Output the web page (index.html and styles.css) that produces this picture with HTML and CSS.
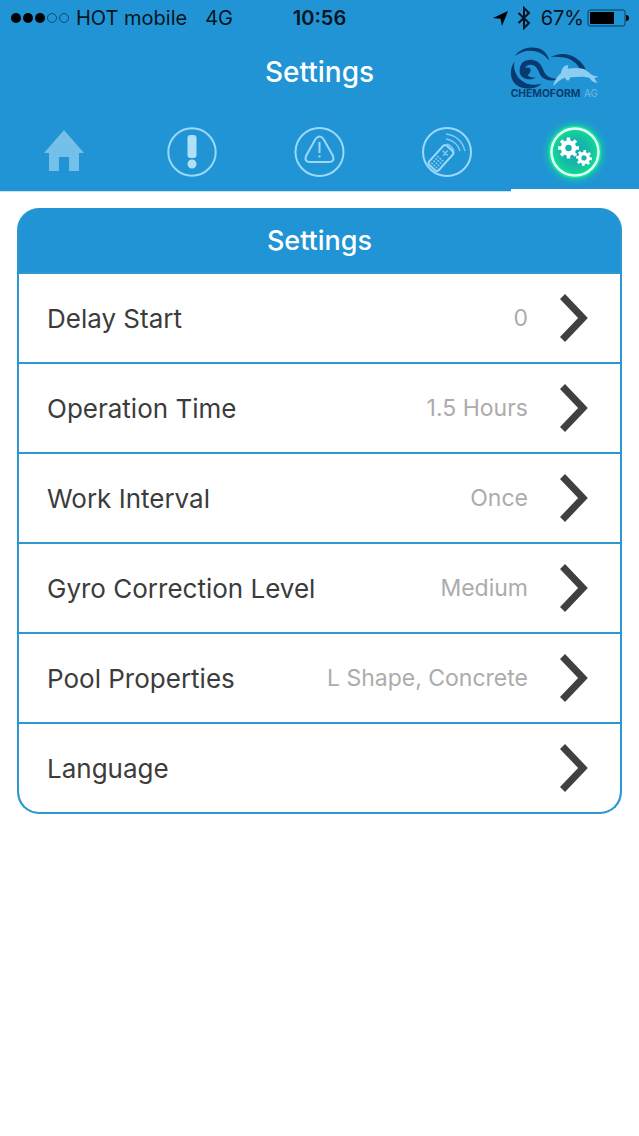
FILE: index.html
```html
<!DOCTYPE html>
<html lang="en">
<head>
<meta charset="utf-8">
<meta name="viewport" content="width=device-width, initial-scale=1">
<title>Settings</title>
<link rel="stylesheet" href="styles.css">
</head>
<body>
<header class="header">
  <div class="status">
    <div class="status-left">
      <svg class="signal" viewBox="0 0 60 12" aria-hidden="true">
        <circle cx="6" cy="6" r="5"/><circle cx="18" cy="6" r="5"/><circle cx="30" cy="6" r="5"/>
        <circle class="signal-off" cx="42" cy="6" r="4.5"/><circle class="signal-off" cx="54" cy="6" r="4.5"/>
      </svg>
      <span>HOT mobile</span>
      <span class="network">4G</span>
    </div>
    <div class="clock">10:56</div>
    <div class="status-right">
      <svg class="location" viewBox="0 0 16 16" aria-hidden="true"><path d="M16 0 0 7.5 8 8.2 9.6 16Z"/></svg>
      <svg class="bluetooth" viewBox="0 0 14 24" aria-hidden="true"><path d="M1.5 7 12 17 7 22V2L12 7 1.5 17"/></svg>
      <span>67%</span>
      <svg class="battery" viewBox="0 0 42 18" aria-hidden="true">
        <rect class="battery-case" x="1" y="1" width="37" height="16" rx="2"/><rect x="3" y="3" width="24" height="12"/><path d="M39 6q3 0 3 3t-3 3Z"/>
      </svg>
    </div>
  </div>
  <div class="title-bar">
    <h1 class="title">Settings</h1>
    <svg class="logo" viewBox="0 0 360 222" role="img" aria-label="Chemoform AG">
      <path class="logo-wave" d="M60 59C82 31 118 31 138 40C152 48 159 60 163 74C146 52 126 44 105 44C87 44 75 50 60 59Z"/>
      <path class="logo-wave" d="M58 78C42 98 40 150 90 157C112 160 129 154 140 143C122 148 104 147 90 140C66 128 54 104 58 78Z"/>
      <path class="logo-wave" d="M74 108C72 80 90 70 108 71C132 73 140 88 146 104C152 119 162 126 192 130C172 136 148 134 138 120C130 108 128 88 108 86C96 86 90 92 92 97C98 92 108 96 107 104C106 111 100 114 98 118C103 124 112 126 122 124C108 136 76 130 74 108Z"/>
      <path class="logo-wave" d="M167 63C197 47 230 53 250 72C261 80 267 90 272 100L254 97C241 75 218 62 190 63Q178 62 167 63Z"/>
      <path class="logo-dolphin" d="M174 151Q179 128 198 111C200 98 206 88 221 87Q217 93 218 98C240 96 262 93 280 108C291 117 295 121 311 121Q302 126 298 127L307 141Q291 139 284 126C264 119 246 123 227 124L220 134Q211 132 210 125C197 128 187 139 174 151Z"/>
      <text class="logo-text" x="47" y="183">CHEMOFORM</text>
      <text class="logo-text logo-suffix" x="267" y="183">AG</text>
    </svg>
  </div>
  <nav class="tabs" aria-label="Main">
    <a class="tab" href="#home" aria-label="Home">
      <svg class="tab-icon" viewBox="0 0 64 64"><path class="house" d="M32 10 52 33H47V51H37V37H27V51H17V33H12Z"/></svg>
    </a>
    <a class="tab" href="#status" aria-label="Status">
      <svg class="tab-icon" viewBox="0 0 64 64"><circle class="line" cx="32" cy="32" r="23.7"/><rect class="soft" x="27.5" y="15" width="9" height="23" rx="3"/><circle class="soft" cx="32" cy="44" r="4.5"/></svg>
    </a>
    <a class="tab" href="#alerts" aria-label="Alerts">
      <svg class="tab-icon" viewBox="0 0 64 64"><circle class="line" cx="32.5" cy="32" r="24"/><path class="line" d="M28.5 19Q32.5 14 36.5 19L46 36Q48 42 42 42H23Q17 42 19 36Z"/><path class="line" d="M32.5 22V33M32.5 35.5V37.5"/></svg>
    </a>
    <a class="tab" href="#remote" aria-label="Remote control">
      <svg class="tab-icon" viewBox="0 0 64 64"><circle class="line" cx="32" cy="32" r="24"/>
        <g transform="translate(26 38) rotate(42)"><rect class="line" x="-6.5" y="-13" width="13" height="26" rx="3"/><path class="fine" d="M0-10V-3M-3.5-6.5H3.5M-4 1H-2M-1 1H1M2 1H4M-4 4H-2M-1 4H1M2 4H4M-4 7H-2M-1 7H1M2 7H4M-4 10H-2M-1 10H1M2 10H4"/></g>
        <path class="fine" d="M32 24Q37 26 39 31M31 19Q42 21 45 31M31 14Q46 16 50 31"/></svg>
    </a>
    <a class="tab tab-active" href="#settings" aria-label="Settings" aria-current="page">
      <svg class="tab-icon glow" viewBox="0 0 64 64">
        <defs><radialGradient id="halo-fill"><stop offset="0" stop-color="#16a9b8"/><stop offset=".55" stop-color="#14b9a8"/><stop offset="1" stop-color="#14dc92"/></radialGradient></defs>
        <circle class="halo" cx="32" cy="32" r="24"/><circle class="ring" cx="32" cy="32" r="23.5"/>
        <g transform="translate(25.5 28)"><circle class="gear" r="5.5"/><path class="teeth" d="M0-7V-10.5M0 7V10.5M-7 0H-10.5M7 0H10.5M5-5 7.4-7.4M-5-5-7.4-7.4M5 5 7.4 7.4M-5 5-7.4 7.4"/></g>
        <g transform="translate(41 38) rotate(6) scale(.76)"><circle class="gear" r="5.7"/><path class="teeth" d="M0-7V-10.5M0 7V10.5M-7 0H-10.5M7 0H10.5M5-5 7.4-7.4M-5-5-7.4-7.4M5 5 7.4 7.4M-5 5-7.4 7.4"/></g>
      </svg>
    </a>
  </nav>
</header>
<main class="content">
  <section class="card" aria-labelledby="card-title">
    <h2 class="card-title" id="card-title">Settings</h2>
    <button class="row" type="button"><span>Delay Start</span><span class="value">0</span><svg class="chevron" viewBox="0 0 28 48" aria-hidden="true"><path d="M2.5 2.5 23 24 2.5 45.5"/></svg></button>
    <button class="row" type="button"><span>Operation Time</span><span class="value">1.5 Hours</span><svg class="chevron" viewBox="0 0 28 48" aria-hidden="true"><path d="M2.5 2.5 23 24 2.5 45.5"/></svg></button>
    <button class="row" type="button"><span>Work Interval</span><span class="value">Once</span><svg class="chevron" viewBox="0 0 28 48" aria-hidden="true"><path d="M2.5 2.5 23 24 2.5 45.5"/></svg></button>
    <button class="row" type="button"><span>Gyro Correction Level</span><span class="value">Medium</span><svg class="chevron" viewBox="0 0 28 48" aria-hidden="true"><path d="M2.5 2.5 23 24 2.5 45.5"/></svg></button>
    <button class="row" type="button"><span>Pool Properties</span><span class="value">L Shape, Concrete</span><svg class="chevron" viewBox="0 0 28 48" aria-hidden="true"><path d="M2.5 2.5 23 24 2.5 45.5"/></svg></button>
    <button class="row" type="button"><span>Language</span><span class="value"></span><svg class="chevron" viewBox="0 0 28 48" aria-hidden="true"><path d="M2.5 2.5 23 24 2.5 45.5"/></svg></button>
  </section>
</main>
</body>
</html>
```
FILE: styles.css
```css
* { box-sizing: border-box; }
body { margin: 0; background: #fff; color: #3c3c3c; font-family: Inter, "Liberation Sans", sans-serif; }
.header { background: #2094d4; }
.status { display: grid; grid-template-columns: 1fr auto 1fr; align-items: center; height: 36px; padding: 0 10px; color: #06141f; font-size: 20px; }
.status-left, .status-right { display: flex; align-items: center; }
.status-right { justify-content: flex-end; }
.signal { width: 60px; height: 12px; margin-right: 6px; }
.signal-off { fill: none; stroke: #0c4d75; stroke-width: 1; }
.network { margin-left: 18px; }
.clock { font-weight: 600; }
.location { width: 15px; height: 15px; margin-right: 9px; }
.bluetooth { width: 14px; height: 24px; margin-right: 10px; fill: none; stroke: #06141f; stroke-width: 2; }
.battery { width: 42px; height: 18px; margin-left: 3px; }
.battery-case { fill: none; stroke: #0c3d5c; stroke-width: 1; }
.title-bar { display: grid; grid-template-columns: 1fr auto 1fr; align-items: center; padding-right: 24px; padding-left: 24px; }
.title { grid-column: 2; margin: 0; padding-bottom: 2px; color: #fff; font-size: 28px; line-height: 36px; font-weight: 500; }
.logo { width: 120px; height: 74px; justify-self: end; }
.logo-wave { fill: #073b70; }
.logo-dolphin { fill: #8dcdf0; }
.logo-text { fill: #083c6e; font: 700 31px Inter, "Liberation Sans", sans-serif; }
.logo-suffix { fill: #67b5e2; font-size: 29px; font-weight: 500; }
.tabs { display: grid; grid-template-columns: repeat(5, 1fr); }
.tab { display: flex; justify-content: center; height: 82px; padding-top: 10px; border-bottom: 1px solid #c3e5f7; }
.tab-active { border-bottom: 3px solid #fff; }
.tab-icon { width: 64px; height: 64px; overflow: visible; }
.house { fill: #75c0e8; }
.soft { fill: #b0dff8; }
.line { fill: none; stroke: #9cd9f8; stroke-width: 2; }
.fine { fill: none; stroke: #83caee; stroke-width: 1.5; }
.glow { filter: drop-shadow(0 0 4px #12e298); }
.halo { fill: url(#halo-fill); stroke: #16df9b; stroke-width: 5; }
.ring { fill: none; stroke: #e0fff5; stroke-width: 2.5; }
.gear { fill: none; stroke: #fff; stroke-width: 4.5; }
.teeth { stroke: #fff; stroke-width: 3.5; }
.content { padding: 16px 17px; }
.card { overflow: hidden; border: 1px solid #2d97d2; border-width: 0 2px 2px; border-radius: 22px; background: #2094d4; }
.card-title { margin: 0; padding: 15px 0 13px; color: #fff; font-size: 27px; line-height: 36px; font-weight: 500; text-align: center; }
.row { display: flex; align-items: center; width: 100%; height: 90px; padding: 0 32px 0 28px; border: 0; border-top: 2px solid #2d97d2; background: #fff; color: #3c3c3c; font: 400 26px Inter, "Liberation Sans", sans-serif; text-align: left; }
.row:last-child { border-radius: 0 0 20px 20px; }
.value { flex: 1; margin-right: 32px; color: #acacac; font-size: 23px; text-align: right; }
.chevron { width: 28px; height: 48px; fill: none; stroke: #404040; stroke-width: 7; }
```
